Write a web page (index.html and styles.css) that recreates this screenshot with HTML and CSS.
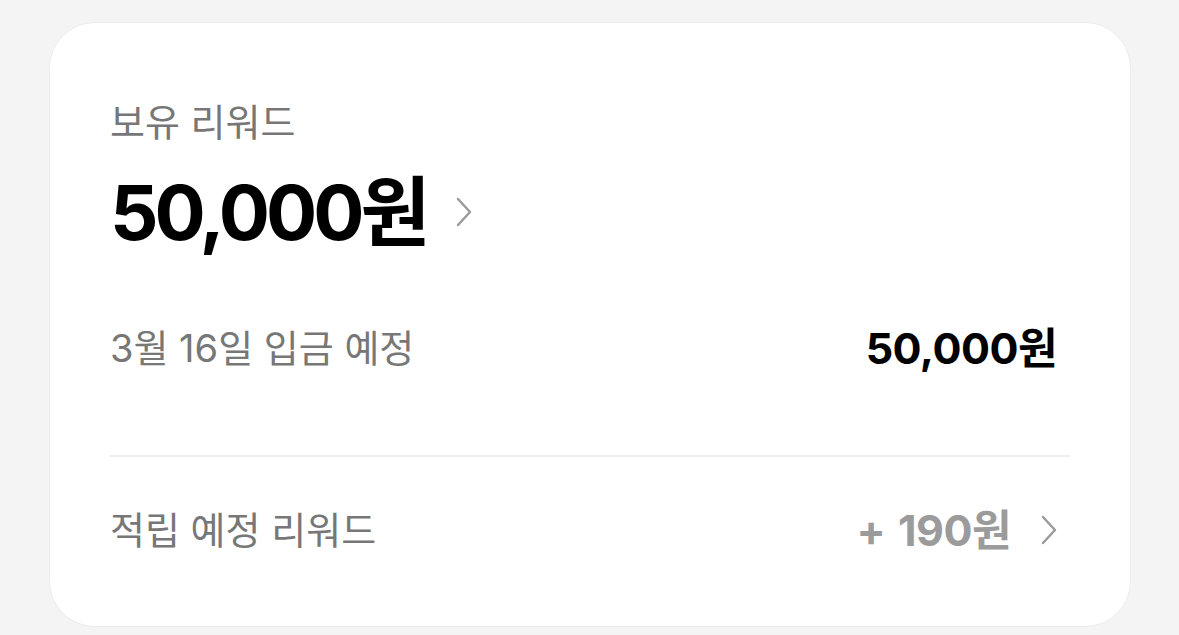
FILE: index.html
```html
<!DOCTYPE html>
<html lang="ko">
<head>
<meta charset="utf-8">
<link rel="stylesheet" href="styles.css">
</head>
<body>
<div class="page">
  <div class="card">
    <div class="label">보유 리워드</div>
    <div class="total">
      <span class="total-amount">50,000원</span>
      <svg class="chev chev-big" viewBox="0 0 16 30" width="16" height="30"><path d="M2 2 L14 15 L2 28" fill="none" stroke="#9a9a9a" stroke-width="2.4" stroke-linecap="round" stroke-linejoin="round"/></svg>
    </div>
    <div class="row row-deposit">
      <span class="row-label">3월 16일 입금 예정</span>
      <span class="row-value">50,000원</span>
    </div>
    <div class="divider"></div>
    <div class="row row-pending">
      <span class="row-label">적립 예정 리워드</span>
      <span class="pending">
        <span class="pending-value">+ 190원</span>
        <svg class="chev" viewBox="0 0 16 30" width="16" height="30"><path d="M2 2 L14 15 L2 28" fill="none" stroke="#9a9a9a" stroke-width="2.4" stroke-linecap="round" stroke-linejoin="round"/></svg>
      </span>
    </div>
  </div>
</div>
</body>
</html>
```

FILE: styles.css
```css
html, body {
  margin: 0;
  padding: 0;
  background: #f4f4f4;
}
body {
  font-family: Inter, "Noto Sans CJK KR", sans-serif;
  width: 1179px;
  height: 635px;
  overflow: hidden;
}
.page {
  padding: 22px 48px 0 49px;
}
.card {
  box-sizing: border-box;
  width: 1082px;
  height: 605px;
  background: #fff;
  border: 1px solid #ececec;
  border-radius: 46px;
  padding: 79px 60px 0 60px;
}
.label {
  font-size: 38px;
  line-height: 40px;
  color: #777;
}
.total {
  display: flex;
  align-items: center;
  margin-top: 25px;
  height: 90px;
}
.total-amount {
  font-size: 76px;
  font-weight: 700;
  color: #000;
  letter-spacing: -4px;
  line-height: 90px;
}
.chev-big {
  margin-left: 30px;
}
.row {
  display: flex;
  justify-content: space-between;
  align-items: center;
}
.row-deposit {
  margin-top: 66px;
  height: 50px;
  padding-right: 13px;
}
.row-label {
  font-size: 38px;
  line-height: 50px;
  color: #777;
}
.row-value {
  font-size: 43px;
  line-height: 50px;
  font-weight: 700;
  color: #000;
  letter-spacing: -0.5px;
}
.divider {
  height: 2px;
  background: #eeeeee;
  margin-top: 82px;
}
.row-pending {
  margin-top: 48px;
  height: 50px;
  padding-right: 13px;
}
.pending {
  display: flex;
  align-items: center;
}
.pending-value {
  font-size: 43px;
  line-height: 50px;
  font-weight: 700;
  color: #9b9b9b;
  letter-spacing: -0.5px;
  word-spacing: 3px;
}
.pending .chev {
  margin-left: 30px;
}
```
